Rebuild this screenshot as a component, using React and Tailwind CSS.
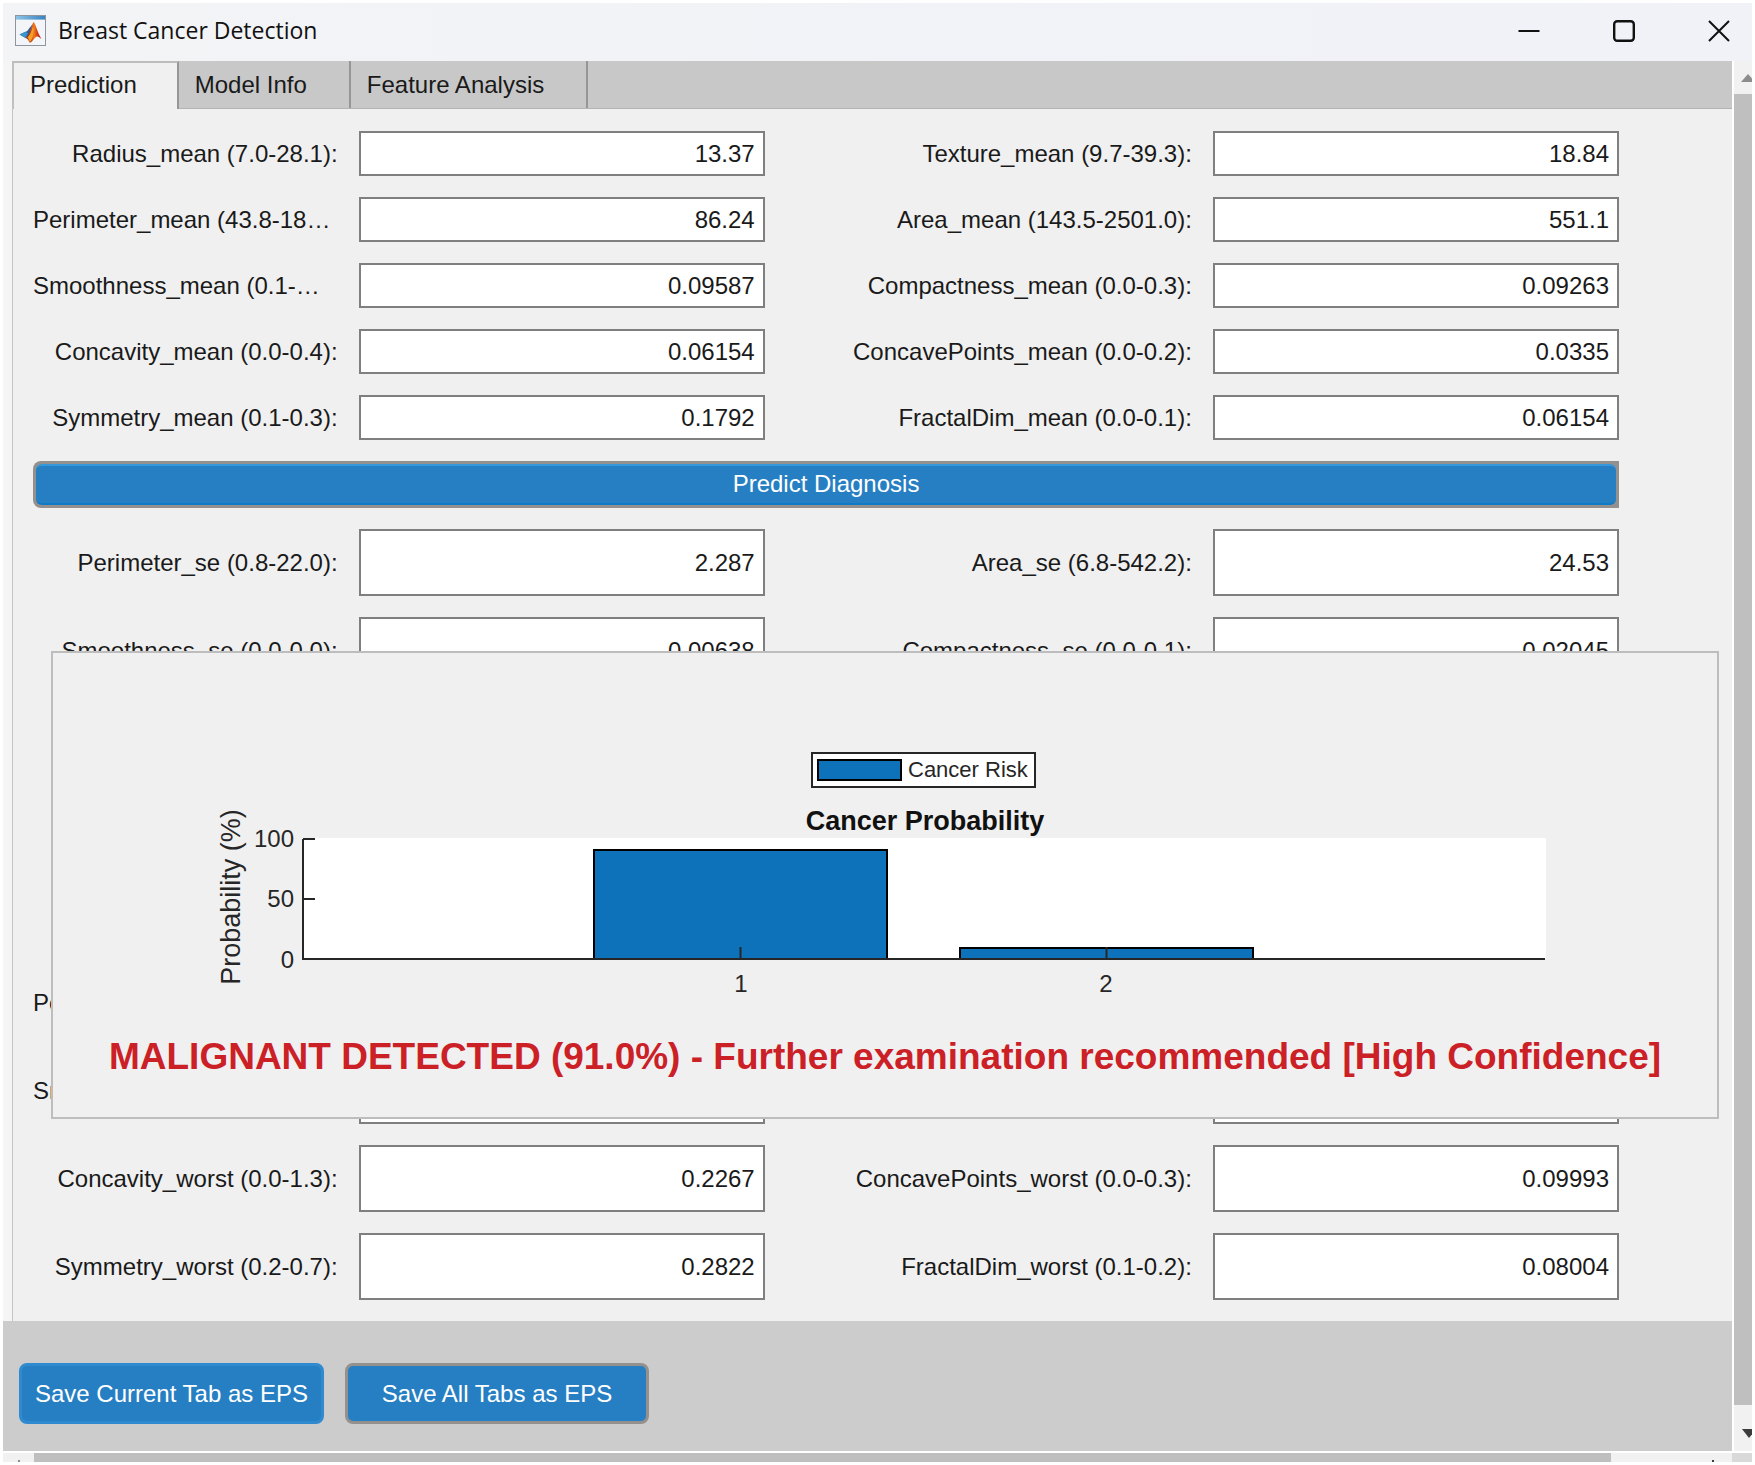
import React, { useState } from "react";

const tabs = ["Prediction", "Model Info", "Feature Analysis"];

const meanFields = [
  { id: "radius_mean", label: "Radius_mean (7.0-28.1):", value: "13.37" },
  { id: "texture_mean", label: "Texture_mean (9.7-39.3):", value: "18.84" },
  { id: "perimeter_mean", label: "Perimeter_mean (43.8-18…", value: "86.24" },
  { id: "area_mean", label: "Area_mean (143.5-2501.0):", value: "551.1" },
  { id: "smoothness_mean", label: "Smoothness_mean (0.1-…", value: "0.09587" },
  { id: "compactness_mean", label: "Compactness_mean (0.0-0.3):", value: "0.09263" },
  { id: "concavity_mean", label: "Concavity_mean (0.0-0.4):", value: "0.06154" },
  { id: "concavepoints_mean", label: "ConcavePoints_mean (0.0-0.2):", value: "0.0335" },
  { id: "symmetry_mean", label: "Symmetry_mean (0.1-0.3):", value: "0.1792" },
  { id: "fractaldim_mean", label: "FractalDim_mean (0.0-0.1):", value: "0.06154" },
];

const otherFields = [
  { id: "perimeter_se", label: "Perimeter_se (0.8-22.0):", value: "2.287" },
  { id: "area_se", label: "Area_se (6.8-542.2):", value: "24.53" },
  { id: "smoothness_se", label: "Smoothness_se (0.0-0.0):", value: "0.00638" },
  { id: "compactness_se", label: "Compactness_se (0.0-0.1):", value: "0.02045" },
  { id: "concavity_se", label: "Concavity_se (0.0-0.4):", value: "0.02589" },
  { id: "concavepoints_se", label: "ConcavePoints_se (0.0-0.1):", value: "0.01093" },
  { id: "symmetry_se", label: "Symmetry_se (0.0-0.1):", value: "0.01873" },
  { id: "fractaldim_se", label: "FractalDim_se (0.0-0.0):", value: "0.003187" },
  { id: "radius_worst", label: "Radius_worst (7.9-36.0):", value: "14.97" },
  { id: "texture_worst", label: "Texture_worst (12.0-49.5):", value: "25.41" },
  { id: "perimeter_worst", label: "Perimeter_worst (50.4-2…", value: "97.66" },
  { id: "area_worst", label: "Area_worst (185.2-4254.0):", value: "686.5" },
  { id: "smoothness_worst", label: "Smoothness_worst (0.1-…", value: "0.1313" },
  { id: "compactness_worst", label: "Compactness_worst (0.0-1.1):", value: "0.2119" },
  { id: "concavity_worst", label: "Concavity_worst (0.0-1.3):", value: "0.2267" },
  { id: "concavepoints_worst", label: "ConcavePoints_worst (0.0-0.3):", value: "0.09993" },
  { id: "symmetry_worst", label: "Symmetry_worst (0.2-0.7):", value: "0.2822" },
  { id: "fractaldim_worst", label: "FractalDim_worst (0.1-0.2):", value: "0.08004" },
];

const AppIcon = () => (
  <svg width="31" height="31" viewBox="0 0 31 31" aria-hidden="true">
    <defs>
      <linearGradient id="bar" x1="0" x2="1" y1="0" y2="0">
        <stop offset="0" stopColor="#8cc4e8" />
        <stop offset="1" stopColor="#3a84c0" />
      </linearGradient>
      <linearGradient id="flame" x1="0" x2="1" y1="0" y2="0">
        <stop offset="0" stopColor="#7c1f16" />
        <stop offset="0.35" stopColor="#c9401a" />
        <stop offset="0.55" stopColor="#f07a1c" />
        <stop offset="0.7" stopColor="#d8431a" />
        <stop offset="1" stopColor="#a81c17" />
      </linearGradient>
    </defs>
    <rect x="0.5" y="0.5" width="30" height="30" fill="#f3f5f8" stroke="#8e959e" />
    <rect x="1" y="1" width="29" height="3.6" fill="url(#bar)" />
    <path d="M4.5 19.5 L10.5 16.8 C13 16.5 14.5 12 17.5 9.5 L14.5 19 L10.5 23 Z" fill="#28619e" />
    <path d="M4.5 19.5 L10.5 16.8 L13 18.5 L10 22.5 Z" fill="#3b96cc" />
    <path
      d="M18.5 7 C20.5 8 22.5 18 26.5 24 C24 22 22.5 21 21 22 C18.5 24 17 28 14.5 27.5 C13.5 25 12.5 23.5 10.5 23 C14.5 20.5 16.5 10 18.5 7 Z"
      fill="url(#flame)"
    />
    <path d="M18 11 C19.5 16 18.5 23 14.8 27.2 C14 25 13.4 23.6 12.4 22.6 C15 20 16.8 16 18 11 Z" fill="#f7a01f" />
  </svg>
);

const TitleBar = () => (
  <header className="flex h-[58px] items-center bg-gradient-to-r from-[#f2f4f6] to-[#f1f1f8] pb-[3px] pl-3 pr-[22px]">
    <AppIcon />
    <h1 className="ml-3 flex-1 font-['Open_Sans','Noto_Sans',sans-serif] text-[23px] text-[#111]">
      Breast Cancer Detection
    </h1>
    <div className="flex gap-[73px]">
      <button aria-label="Minimize">
        <svg width="22" height="22" viewBox="0 0 22 22">
          <path d="M0.5 11 H21.5" stroke="#111" strokeWidth="2" />
        </svg>
      </button>
      <button aria-label="Maximize">
        <svg width="22" height="22" viewBox="0 0 22 22">
          <rect x="1.2" y="1.2" width="19.6" height="19.6" rx="3" fill="none" stroke="#111" strokeWidth="2.4" />
        </svg>
      </button>
      <button aria-label="Close">
        <svg width="22" height="22" viewBox="0 0 22 22">
          <path d="M1 1 L21 21 M21 1 L1 21" stroke="#111" strokeWidth="2" />
        </svg>
      </button>
    </div>
  </header>
);

const Field = ({ id, label, value, tall }) => (
  <>
    <label
      htmlFor={id}
      className={
        label.endsWith("…")
          ? "self-center whitespace-nowrap text-left"
          : "self-center whitespace-nowrap text-right"
      }
    >
      {label}
    </label>
    <input
      id={id}
      type="text"
      defaultValue={value}
      className={
        tall
          ? "h-[67px] w-full min-w-0 border-2 border-[#7f7f7f] bg-white pr-2 text-right"
          : "h-[45px] w-full min-w-0 border-2 border-[#7f7f7f] bg-white pr-2 text-right"
      }
    />
  </>
);

const ProbabilityChart = () => (
  <svg
    viewBox="0 0 1664 350"
    className="block h-auto w-full"
    role="img"
    aria-label="Cancer Probability"
    fontFamily="'Liberation Sans', Arial, sans-serif"
    fill="#262626"
  >
    {/* Legend */}
    <rect x="759" y="100" width="223" height="34" fill="#fff" stroke="#262626" strokeWidth="2" />
    <rect x="765" y="107" width="83" height="20" fill="#0e72bb" stroke="#000" strokeWidth="2" />
    <text x="855" y="124" fontSize="22">Cancer Risk</text>

    <text x="872" y="177" fontSize="27" fontWeight="bold" textAnchor="middle" fill="#111">
      Cancer Probability
    </text>

    {/* Plot area */}
    <rect x="249" y="185" width="1244" height="121" fill="#fff" />
    <g fill="#0e72bb" stroke="#000" strokeWidth="2">
      <rect x="541" y="197" width="293" height="109" />
      <rect x="907" y="295" width="293" height="11" />
    </g>
    <g stroke="#262626" strokeWidth="2">
      <path d="M250 186 V306 H1492" fill="none" />
      <path d="M250 186 H262 M250 246 H262" />
      <path d="M687.5 294 V306 M1053.5 294 V306" />
    </g>

    <g fontSize="24" textAnchor="end">
      <text x="241" y="194">100</text>
      <text x="241" y="254">50</text>
      <text x="241" y="315">0</text>
    </g>
    <g fontSize="24" textAnchor="middle">
      <text x="688" y="339">1</text>
      <text x="1053" y="339">2</text>
    </g>
    <text transform="translate(187 244) rotate(-90)" fontSize="27" textAnchor="middle">
      Probability (%)
    </text>
  </svg>
);

const ResultPanel = () => (
  <section className="absolute left-[38px] right-[13px] top-[542px] border-2 border-[#bdbdbd] bg-[#f0f0f0] pb-[30px]">
    <ProbabilityChart />
    <p className="mt-6 whitespace-nowrap text-center text-[37px] font-bold leading-[60px] text-[#cc2027]">
      MALIGNANT DETECTED (91.0%) - Further examination recommended [High Confidence]
    </p>
  </section>
);

const App = () => {
  const [active, setActive] = useState("Prediction");

  return (
    <div className="bg-white p-[3px] font-['Liberation_Sans',Arial,sans-serif] text-2xl text-[#1a1a1a]">
      <TitleBar />

      <div className="flex">
        <div className="min-w-0 flex-1">
          <div className="bg-[#f5f5f5] pl-[9px]">
            {/* Tabs */}
            <nav className="flex h-12 border-b border-[#b4b4b4] bg-[#c8c8c8]" role="tablist">
              {tabs.map((tab) => (
                <button
                  key={tab}
                  role="tab"
                  aria-selected={tab === active}
                  onClick={() => setActive(tab)}
                  className={
                    tab === active
                      ? "-mb-px border-l-2 border-r-2 border-t-2 border-l-[#c0c0c0] border-r-[#969696] border-t-[#bdbdbd] bg-[#f0f0f0] pb-[2px] pl-4 pr-10"
                      : "border-r-2 border-[#969696] pl-4 pr-[42px]"
                  }
                >
                  {tab}
                </button>
              ))}
            </nav>

            {/* Form */}
            <main className="relative border-l border-[#c4c4c4] bg-[#f0f0f0] pb-[21px] pl-5 pr-[113px] pt-[22px]">
              <form
                className="grid grid-cols-[minmax(0,3fr)_minmax(0,4fr)_minmax(0,4fr)_minmax(0,4fr)] gap-[21px]"
                onSubmit={(e) => e.preventDefault()}
              >
                {meanFields.map((field) => (
                  <Field key={field.id} {...field} />
                ))}
                <button
                  type="submit"
                  className="col-span-4 h-[47px] rounded-l-lg bg-[#94908d] p-[3px] text-white"
                >
                  <span className="flex h-full items-center justify-center rounded-md border-y-2 border-b-[#0f7ac6] border-t-[#3598db] bg-[#277fc3] pb-[2px]">
                    Predict Diagnosis
                  </span>
                </button>
                {otherFields.map((field) => (
                  <Field key={field.id} {...field} tall />
                ))}
              </form>
              <ResultPanel />
            </main>
          </div>

          <footer className="flex gap-[21px] bg-[#ccc] px-4 pb-[27px] pt-[42px] text-white">
            <button className="h-[61px] w-[305px] whitespace-nowrap rounded-lg border-[3px] border-[#2f8ad0] bg-[#277fc3]">
              Save Current Tab as EPS
            </button>
            <button className="h-[61px] w-[304px] whitespace-nowrap rounded-lg border-[3px] border-[#94908d] bg-[#277fc3]">
              Save All Tabs as EPS
            </button>
          </footer>
        </div>

        {/* Vertical scrollbar */}
        <div className="flex w-5 flex-col overflow-hidden border-l-2 border-white bg-[#f1f1f1]">
          <svg width="18" height="33" viewBox="0 0 18 33" aria-hidden="true">
            <path d="M7 21 L14 13 L21 21 Z" fill="#8c8c8c" />
          </svg>
          <div className="flex-1 bg-[#bfbfbf]" />
          <svg width="18" height="46" viewBox="0 0 18 46" aria-hidden="true">
            <path d="M8 24 L22 24 L15 33 Z" fill="#3c3c3c" />
          </svg>
        </div>
      </div>

      {/* Horizontal scrollbar */}
      <div className="flex h-[11px] border-t-2 border-white bg-[#f1f1f1]">
        <div className="flex w-[31px] items-end justify-center">
          <span className="size-[2px] bg-[#8c8c8c]" />
        </div>
        <div className="flex-1 bg-[#bfbfbf]" />
        <div className="flex w-[121px] items-end justify-end pr-[18px]">
          <span className="size-[2px] bg-[#3c3c3c]" />
        </div>
        <div className="w-5 bg-[#d9d9d9]" />
      </div>
    </div>
  );
};

export default App;
